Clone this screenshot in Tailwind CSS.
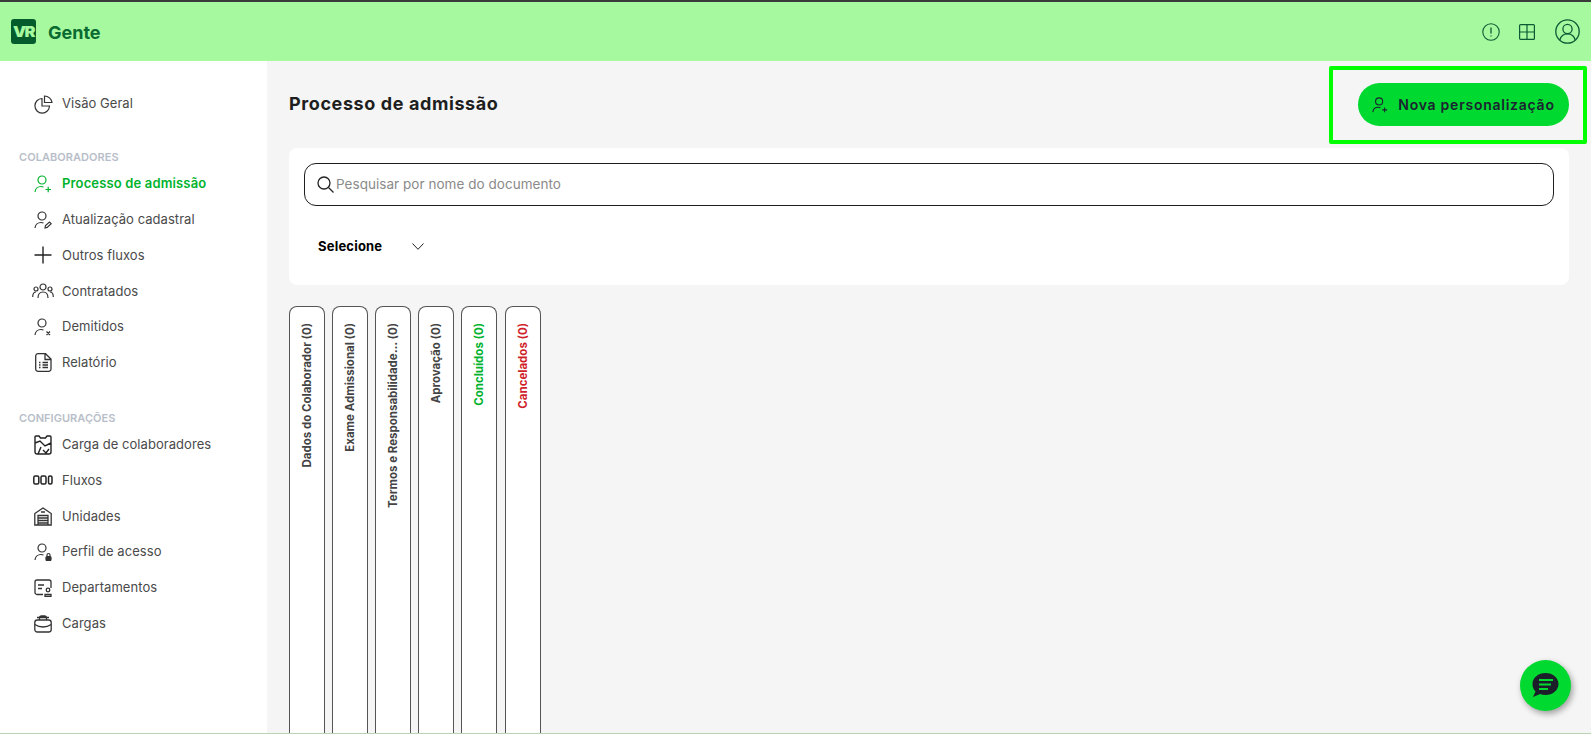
<!DOCTYPE html>
<html lang="pt-BR">
<head>
<meta charset="utf-8">
<script src="https://cdn.jsdelivr.net/npm/@tailwindcss/browser@4"></script>
<title>Gente</title>
</head>
<body class="h-[734px] overflow-hidden bg-[#f5f5f5] font-['Inter',sans-serif] text-[#3d3d3d]">
<div class="relative flex h-[734px] flex-col overflow-hidden border-t-2 border-[#3a3a3a]">
  <header class="flex h-[59px] shrink-0 items-center justify-between bg-[#a6f99e] pl-[11px] pr-[11px]">
    <div class="flex items-center gap-3">
      <div class="flex h-[25px] w-[25px] items-center justify-center rounded-[3px] bg-[#045c2c] text-[15px] leading-none font-black tracking-[-1.5px] text-[#a6f99e]"><span class="scale-x-110">VR</span></div>
      <span class="pt-[2px] text-[18px] font-bold text-[#0a6b32]">Gente</span>
    </div>
    <div class="flex items-center text-[#0b5a35]">
      <svg class="h-[18px] w-[18px]" viewBox="0 0 18 18" fill="none" stroke="currentColor" stroke-width="1.1"><circle cx="9" cy="9" r="8.2"/><path d="M9 4.500v6M9 12.600v1" stroke-width="1.3"/></svg>
      <svg class="ml-[19px] h-[16px] w-[16px]" viewBox="0 0 16 16" fill="none" stroke="currentColor" stroke-width="1.2"><rect x=".6" y=".6" width="14.8" height="14.8" rx="1"/><path d="M8 .6v14.8M.6 8h14.8"/></svg>
      <svg class="ml-[20px] h-[25px] w-[25px]" viewBox="0 0 25 25" fill="none" stroke="currentColor" stroke-width="1.3"><circle cx="12.5" cy="12.5" r="11.7"/><circle cx="12.5" cy="10" r="4.6"/><path d="M4.800 21c1-4 4-6.200 7.700-6.200S19.200 17 20.200 21"/></svg>
    </div>
  </header>

  <div class="flex min-h-0 flex-1">
    <aside class="w-[267px] shrink-0 bg-white pt-[25px] text-[13px] tracking-[0.05px] text-[#4a4a4a]">
      <a class="flex h-[36px] items-center">
        <span class="flex w-[62px] justify-center pl-[24px]"><svg class="h-[19px] w-[19px]" viewBox="0 0 19 19" fill="none" stroke="#333" stroke-width="1.200"><path d="M8 3.500a7.300 7.300 0 1 0 7.500 7.500H8z"/><path d="M10.500 1v6.500H18A7.500 7.500 0 0 0 10.500 1z"/></svg></span>
        <span>Visão Geral</span>
      </a>
      <div class="mt-[26px] h-[18px] pl-[19px] text-[11px] leading-[18px] font-semibold tracking-[0.05px] text-[#b8bec9]">COLABORADORES</div>
      <a class="flex h-[35.800px] items-center font-semibold tracking-[0.15px] text-[#00b32d]">
        <span class="flex w-[62px] justify-center pl-[24px]"><svg class="h-[18px] w-[18px]" viewBox="0 0 18 18" fill="none" stroke="currentColor" stroke-width="1.200"><circle cx="8" cy="5" r="4"/><path d="M1 17c.3-3.500 3-5.500 6-5.500 1 0 1.800.2 2.500.5M11.500 14.500h5.500M14.200 11.800v5.400"/></svg></span>
        <span>Processo de admissão</span>
      </a>
      <a class="flex h-[35.800px] items-center">
        <span class="flex w-[62px] justify-center pl-[24px]"><svg class="h-[18px] w-[18px]" viewBox="0 0 18 18" fill="none" stroke="#333" stroke-width="1.200"><circle cx="8" cy="5" r="4"/><path d="M1 17c.3-3.500 3-5.500 6-5.500 1 0 1.800.2 2.500.5M11 17l.5-2.500 4-3.500 1.700 1.700-4 3.700z"/></svg></span>
        <span>Atualização cadastral</span>
      </a>
      <a class="flex h-[35.800px] items-center">
        <span class="flex w-[62px] justify-center pl-[24px]"><svg class="h-[18px] w-[18px]" viewBox="0 0 18 18" fill="none" stroke="#222" stroke-width="1.400"><path d="M.5 9h17M9 .5v17"/></svg></span>
        <span>Outros fluxos</span>
      </a>
      <a class="flex h-[35.800px] items-center">
        <span class="flex w-[62px] justify-center pl-[24px]"><svg class="h-[16px] w-[22px]" viewBox="0 0 22 16" fill="none" stroke="#333" stroke-width="1.200"><circle cx="11" cy="4" r="3"/><circle cx="4" cy="6" r="2"/><circle cx="18" cy="6" r="2"/><path d="M6 15c0-4 2-6 5-6s5 2 5 6M.7 14c0-3 1.300-5 3.300-5M21.300 14c0-3-1.300-5-3.300-5"/></svg></span>
        <span>Contratados</span>
      </a>
      <a class="flex h-[35.800px] items-center">
        <span class="flex w-[62px] justify-center pl-[24px]"><svg class="h-[18px] w-[18px]" viewBox="0 0 18 18" fill="none" stroke="#333" stroke-width="1.200"><circle cx="8" cy="5" r="4"/><path d="M1 17c.3-3.500 3-5.500 6-5.500 1 0 1.800.2 2.500.5M12.500 13.500l3.500 3.500M16 13.500L12.500 17"/></svg></span>
        <span>Demitidos</span>
      </a>
      <a class="flex h-[35.800px] items-center">
        <span class="flex w-[62px] justify-center pl-[24px]"><svg class="h-[19px] w-[17px]" viewBox="0 0 17 19" fill="none" stroke="#333" stroke-width="1.300"><path d="M3 .7h7.500L16 6v10a2.300 2.300 0 0 1-2.300 2.300H3A2.300 2.300 0 0 1 .7 16V3A2.300 2.300 0 0 1 3 .7zM10 1v5.500h6M7.500 9.500h5.500M7.500 12h5.500M7.500 14.500h5.500M4 9.500h1.500M4 12h1.500M4 14.500h1.500"/></svg></span>
        <span>Relatório</span>
      </a>
      <div class="mt-[28px] h-[18px] pl-[19px] text-[11px] leading-[18px] font-semibold tracking-[0.05px] text-[#b8bec9]">CONFIGURAÇÕES</div>
      <a class="flex h-[35.800px] items-center">
        <span class="flex w-[62px] justify-center pl-[24px]"><svg class="h-[20px] w-[18px]" viewBox="0 0 18 20" fill="none" stroke="#222" stroke-width="1.400"><path d="M2 1h3l1.500 2h5L13 1h3a1 1 0 0 1 1 1v15a2 2 0 0 1-2 2H3a2 2 0 0 1-2-2V2a1 1 0 0 1 1-1zM1 8l5-2 5 5 6-3M4 19l3-7M9 15l3 3 3-4"/></svg></span>
        <span>Carga de colaboradores</span>
      </a>
      <a class="flex h-[35.800px] items-center">
        <span class="flex w-[62px] justify-center pl-[23px]"><svg class="h-[10px] w-[20px]" viewBox="0 0 20 10" fill="none" stroke="#222" stroke-width="1.500"><rect x=".8" y="1" width="5" height="8" rx="1.500"/><rect x="8" y="1" width="5" height="8" rx="1.500"/><rect x="15.500" y="1" width="3.500" height="8" rx="1.500"/></svg></span>
        <span>Fluxos</span>
      </a>
      <a class="flex h-[35.800px] items-center">
        <span class="flex w-[62px] justify-center pl-[24px]"><svg class="h-[19px] w-[18px]" viewBox="0 0 18 19" fill="none" stroke="#333" stroke-width="1.300"><path d="M.8 18V6.500L9 1l8.200 5.500V18zM4 18V8.500h10V18M4 11h10M4 13.500h10M4 16h10M7 5h4"/></svg></span>
        <span>Unidades</span>
      </a>
      <a class="flex h-[35.800px] items-center">
        <span class="flex w-[62px] justify-center pl-[24px]"><svg class="h-[18px] w-[18px]" viewBox="0 0 18 18" fill="none" stroke="#333" stroke-width="1.200"><circle cx="8" cy="5" r="4"/><path d="M1 17c.3-3.500 3-5.500 6-5.500 1 0 1.800.2 2.500.5"/><rect x="12" y="13.500" width="5" height="4" rx="1" fill="#333"/><path d="M13 13.500V12a1.500 1.500 0 0 1 3 0v1.500"/></svg></span>
        <span>Perfil de acesso</span>
      </a>
      <a class="flex h-[35.800px] items-center">
        <span class="flex w-[62px] justify-center pl-[24px]"><svg class="h-[18px] w-[18px]" viewBox="0 0 18 18" fill="none" stroke="#333" stroke-width="1.300"><path d="M9 15.500H3a2 2 0 0 1-2-2V3a2 2 0 0 1 2-2h12a2 2 0 0 1 2 2v6M4 6h6M4 9.500h4"/><circle cx="14" cy="11" r="1.800"/><path d="M11 17.300v-1.800h6v1.800z"/></svg></span>
        <span>Departamentos</span>
      </a>
      <a class="flex h-[35.800px] items-center">
        <span class="flex w-[62px] justify-center pl-[24px]"><svg class="h-[18px] w-[18px]" viewBox="0 0 18 18" fill="none" stroke="#333" stroke-width="1.300"><rect x=".8" y="5" width="16.400" height="12" rx="2.500"/><path d="M5.500 5V3a2 2 0 0 1 2-2h3a2 2 0 0 1 2 2v2M.8 9.500c3 2 5.500 2.500 8.200 2.500s5.200-.5 8.200-2.500M3 2.500h12"/></svg></span>
        <span>Cargas</span>
      </a>
    </aside>

    <main class="relative min-w-0 flex-1 pl-[22px] pr-[22px]">
      <div class="flex h-[87px] items-center justify-between">
        <h1 class="pb-[2px] text-[18px] font-bold tracking-[0.6px] text-[#1e1e1e]">Processo de admissão</h1>
        <button class="flex h-[43px] w-[211px] items-center justify-center gap-[10px] rounded-full bg-[#00d930] text-[14px] font-semibold tracking-[0.75px] text-[#1c2430]">
          <svg class="h-[16px] w-[16px]" viewBox="0 0 18 18" fill="none" stroke="currentColor" stroke-width="1.200"><circle cx="8" cy="5" r="4"/><path d="M1 17c.3-3.500 3-5.500 6-5.500 1 0 1.800.2 2.500.5M11.500 14.500h5.500M14.200 11.800v5.400"/></svg>
          <span>Nova personalização</span>
        </button>
      </div>

      <section class="h-[137px] rounded-[8px] bg-white px-[15px] pt-[15px]">
        <div class="flex h-[43px] items-center rounded-[12px] border border-[#1e1e1e] pl-[12px]">
          <svg class="mr-[2px] h-[17px] w-[17px] shrink-0" viewBox="0 0 17 17" fill="none" stroke="#222" stroke-width="1.300"><circle cx="7" cy="7" r="6"/><path d="M11.500 11.500l5 5"/></svg>
          <span class="text-[13.500px] tracking-[0.04px] text-[#8a8a8a]">Pesquisar por nome do documento</span>
        </div>
        <div class="mt-[31px] flex items-center pl-[14px]">
          <span class="w-[94px] text-[13px] font-bold tracking-[0.2px] text-black">Selecione</span>
          <svg class="h-[7px] w-[12px]" viewBox="0 0 12 7" fill="none" stroke="#222" stroke-width="1"><path d="M.5.5L6 6.300 11.500.5"/></svg>
        </div>
      </section>

      <div class="mt-[21px] flex h-[428px] gap-[7px] text-[11.500px] font-bold text-[#444]">
        <div class="flex w-[36px] justify-center rounded-t-[8px] border border-b-0 border-[#555] bg-white pt-[16px] pl-[2px]"><span class="h-fit rotate-180 [writing-mode:vertical-rl]">Dados do Colaborador (0)</span></div>
        <div class="flex w-[36px] justify-center rounded-t-[8px] border border-b-0 border-[#555] bg-white pt-[16px] pl-[2px]"><span class="h-fit rotate-180 [writing-mode:vertical-rl]">Exame Admissional (0)</span></div>
        <div class="flex w-[36px] justify-center rounded-t-[8px] border border-b-0 border-[#555] bg-white pt-[16px] pl-[2px]"><span class="h-fit rotate-180 [writing-mode:vertical-rl]">Termos e Responsabilidade... (0)</span></div>
        <div class="flex w-[36px] justify-center rounded-t-[8px] border border-b-0 border-[#555] bg-white pt-[16px] pl-[2px]"><span class="h-fit rotate-180 [writing-mode:vertical-rl]">Aprovação (0)</span></div>
        <div class="flex w-[36px] justify-center rounded-t-[8px] border border-b-0 border-[#555] bg-white pt-[16px] pl-[2px] text-[#00b32d]"><span class="h-fit rotate-180 [writing-mode:vertical-rl]">Concluídos (0)</span></div>
        <div class="ml-px flex w-[36px] justify-center rounded-t-[8px] border border-b-0 border-[#555] bg-white pt-[16px] pl-[1px] text-[#d01f2a]"><span class="h-fit rotate-180 [writing-mode:vertical-rl]">Cancelados (0)</span></div>
      </div>
    </main>
  </div>

  <div class="absolute left-[1329px] top-[64px] h-[78px] w-[258px] rounded-[2px] border-[4px] border-[#00ff00]"></div>

  <button class="absolute left-[1520px] top-[658px] flex h-[51px] w-[51px] items-center justify-center rounded-full bg-[#00d930] shadow-[2px_3px_6px_rgba(0,0,0,0.35)]">
    <svg class="h-[27px] w-[27px]" viewBox="0 0 27 27"><path d="M13.500 1C20.700 1 26.500 5.800 26.500 12s-5.800 11-13 11c-2 0-3.800-.4-5.400-1L1 25l2.500-5.500C1.600 17.500.5 15 .5 12 .5 5.800 6.300 1 13.500 1z" fill="#1c1f2a"/><path d="M7 8h14M7 12.500h12M7 17h9" stroke="#00d930" stroke-width="1.800"/></svg>
  </button>

  <div class="absolute bottom-0 left-0 h-[1px] w-full bg-[#b9d3b4]"></div>
</div>
</body>
</html>
